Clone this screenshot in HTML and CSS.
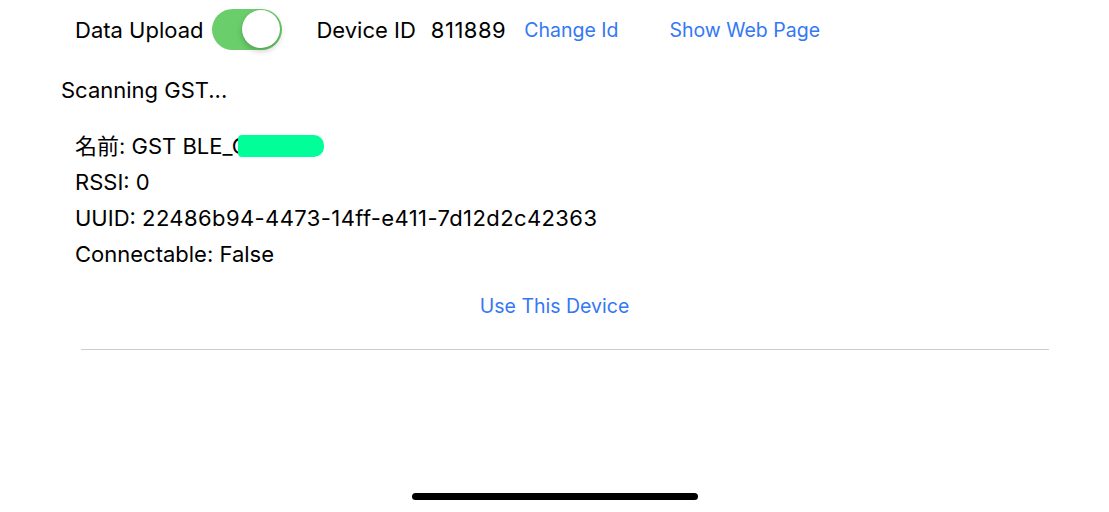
FILE: index.html
```html
<!DOCTYPE html>
<html>
<head>
<meta charset="utf-8">
<link rel="stylesheet" href="styles.css">
</head>
<body>
<div class="screen">
  <div class="topbar">
    <span class="label">Data Upload</span>
    <span class="switch"><span class="knob"></span></span>
    <span class="label device">Device ID</span>
    <span class="label devid">811889</span>
    <span class="link change">Change Id</span>
    <span class="link web">Show Web Page</span>
  </div>
  <div class="status">Scanning GST...</div>
  <div class="info">
    <div class="row">名前: GST BLE_C<span class="mask"></span></div>
    <div class="row">RSSI: 0</div>
    <div class="row">UUID:&nbsp;<span class="uuid">22486b94-4473-14ff-e411-7d12d2c42363</span></div>
    <div class="row">Connectable: False</div>
  </div>
  <div class="use"><span class="link">Use This Device</span></div>
  <div class="divider"></div>
  <div class="home"><span class="indicator"></span></div>
</div>
</body>
</html>
```
FILE: styles.css
```css
html, body {
  margin: 0;
  padding: 0;
  background: #fff;
}
body {
  font-family: "Inter", "Noto Sans CJK JP", sans-serif;
  font-size: 22px;
  color: #000;
}
.screen {
  height: 512px;
  display: flex;
  flex-direction: column;
}
.topbar {
  height: 60px;
  display: flex;
  align-items: center;
  padding-left: 75px;
}
.label, .link {
  white-space: nowrap;
}
.link {
  color: #3478f6;
  font-size: 19.5px;
}
.switch {
  margin-left: 9px;
  width: 70px;
  height: 41px;
  border-radius: 21px;
  background: #6acf6b;
  display: flex;
  align-items: center;
  justify-content: flex-end;
  padding-right: 2px;
  box-sizing: border-box;
  margin-top: -2px;
}
.knob {
  width: 38px;
  height: 38px;
  border-radius: 50%;
  background: #fff;
  box-shadow: 0 3px 6px rgba(0,0,0,0.22), 0 0 1px rgba(0,0,0,0.15);
}
.device { margin-left: 34px; }
.devid { margin-left: 15px; letter-spacing: 0.5px; }
.change { margin-left: 18px; }
.web { margin-left: 51px; }
.status {
  margin-top: 12px;
  padding-left: 61px;
  line-height: 36px;
}
.info {
  margin-top: 20px;
  padding-left: 75px;
}
.row {
  line-height: 36px;
  height: 36px;
  display: flex;
  align-items: center;
  white-space: nowrap;
}
.uuid {
  letter-spacing: 0.4px;
}
.mask {
  display: inline-block;
  width: 86px;
  height: 22px;
  margin-left: -10px;
  background: #00ff99;
  border-radius: 4px 10px 10px 4px;
}
.use {
  margin-top: 15px;
  line-height: 36px;
  text-align: center;
}
.divider {
  margin: 25px 60px 0 81px;
  height: 1px;
  background: #cccccc;
}
.home {
  margin-top: auto;
  height: 19px;
  display: flex;
  justify-content: center;
}
.indicator {
  width: 286px;
  height: 7px;
  border-radius: 4px;
  background: #000;
}
```
